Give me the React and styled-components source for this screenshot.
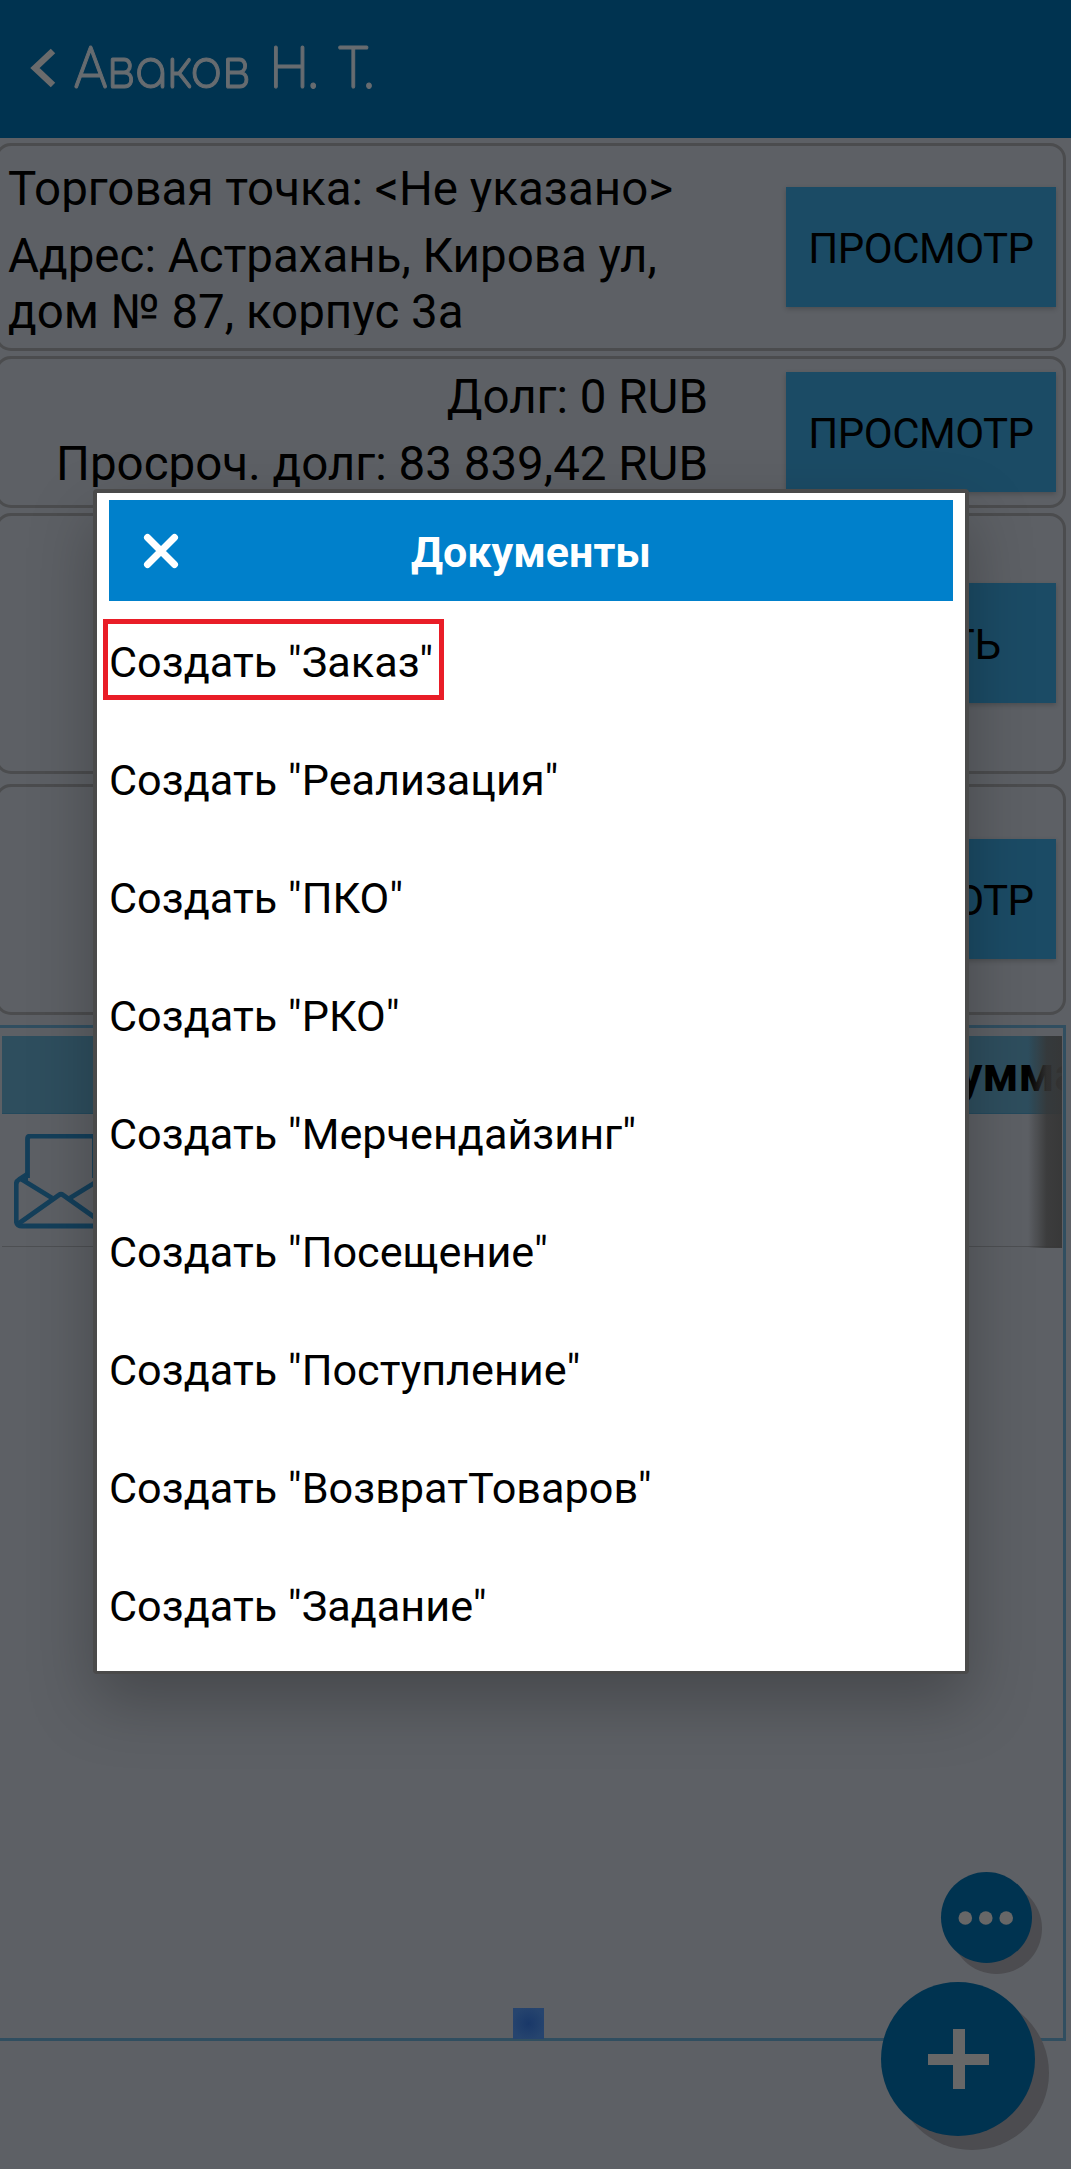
import React from "react";
import styled, { createGlobalStyle, css } from "styled-components";

const Global = createGlobalStyle`
  * { box-sizing: border-box; }
  html, body { margin: 0; padding: 0; background: #5d6065; }
  body { font-family: Roboto, "Liberation Sans", sans-serif; color: #000; }
  button { font-family: inherit; border: 0; margin: 0; padding: 0; }
`;

const Screen = styled.main`
  position: relative;
  width: 1071px;
  height: 2169px;
  overflow: hidden;
  background: #5d6065;
`;

const TopBar = styled.header`
  display: flex;
  align-items: center;
  height: 138px;
  padding-left: 29px;
  background: #003350;
  color: #676c70;
`;

const BackIcon = styled.svg`
  display: block;
  margin-top: -3px;
  color: #6a6b6c;
`;

const Person = styled.h1`
  margin: 0 0 0 18px;
  padding-top: 3px;
  font-family: Comfortaa, Inter, sans-serif;
  font-size: 54px;
  font-weight: 300;
  line-height: 64px;
  word-spacing: 7px;
  white-space: nowrap;
  transform: scaleX(0.872);
  transform-origin: left center;
  -webkit-text-stroke: 1.1px currentColor;
`;

const Cards = styled.div`
  display: flex;
  flex-direction: column;
  padding-top: 5px;
`;

const Card = styled.section`
  display: flex;
  justify-content: space-between;
  flex: none;
  width: 1071px;
  height: ${(p) => p.$height}px;
  margin: 0 0 ${(p) => p.$gap}px -5px;
  padding: 0 7px 0 10px;
  border: 3px solid #4b4c4e;
  border-radius: 16px;
`;

const Lines = styled.div`
  flex: none;
  width: 700px;
  padding-top: ${(p) => p.$top}px;
  text-align: ${(p) => p.$align || "left"};
`;

const Line = styled.p`
  margin: 0 0 ${(p) => (p.$rows ? 0 : 16)}px;
  font-size: 47.5px;
  line-height: 56px;
  height: ${(p) => (p.$rows || 1) * 56 - 5}px;
  overflow: hidden;
  white-space: pre;
`;

const ViewButton = styled.button`
  flex: none;
  width: 270px;
  height: 120px;
  margin-top: ${(p) => p.$top}px;
  padding-top: 4px;
  background: #1b4b65;
  color: #000;
  font-size: 42px;
  line-height: 50px;
  letter-spacing: -0.5px;
  box-shadow: 0 2px 5px rgba(0, 0, 0, 0.2);
`;

const Table = styled.section`
  flex: none;
  width: 1069px;
  height: 1016px;
  margin-left: -3px;
  padding: 8px 1px 0 2px;
  border: 3px solid #304e60;
`;

const TableScroll = styled.div`
  position: relative;
  height: 212px;
  overflow: hidden;
`;

const TableHead = styled.div`
  display: flex;
  justify-content: flex-end;
  align-items: center;
  height: 78px;
  background: #2e4e5e;
  border-bottom: 1px solid #24495c;
  font-size: 47.5px;
  font-weight: 700;
  white-space: nowrap;
`;

const HeadCell = styled.span`
  flex: none;
  margin-right: -18px;
`;

const TableRow = styled.div`
  height: 133px;
  padding: 20px 0 0 12px;
  border-bottom: 1px solid #4d4f52;
`;

const EdgeFade = styled.div`
  position: absolute;
  top: 0;
  right: 0;
  width: 34px;
  height: 100%;
  background: linear-gradient(90deg, rgba(54, 54, 54, 0), rgba(54, 54, 54, 0.85) 55%, rgba(54, 54, 54, 0.95));
`;

const Handle = styled.div`
  position: absolute;
  left: 513px;
  top: 2008px;
  width: 31px;
  height: 31px;
  background: radial-gradient(circle, #193869, #26446e 75%);
`;

const Fab = styled.button`
  position: absolute;
  display: flex;
  align-items: center;
  justify-content: center;
  border-radius: 50%;
  background: #003350;
  color: #676767;
  ${(p) =>
    p.$large
      ? css`
          left: 881px;
          top: 1982px;
          width: 154px;
          height: 154px;
          box-shadow: 14px 14px 0 #4c4c50;
        `
      : css`
          left: 940.5px;
          top: 1872px;
          width: 91px;
          height: 91px;
          box-shadow: 10px 11px 0 #4c4c50;
        `}
`;

const Overlay = styled.div`
  position: absolute;
  inset: 0;
  padding: 489px 0 0 93px;
`;

const Dialog = styled.div`
  width: 876px;
  height: 1185px;
  padding: 7px 12px 0;
  border: 4px solid #4a4a4a;
  border-bottom-width: 3px;
  border-radius: 4px;
  background: #fff;
  background-clip: padding-box;
  box-shadow: 0 28px 64px rgba(0, 0, 0, 0.25);
`;

const DialogHead = styled.div`
  display: grid;
  grid-template-columns: 104px 1fr 104px;
  align-items: center;
  height: 101px;
  background: #0080cb;
  color: #fff;
`;

const Close = styled.button`
  justify-self: start;
  display: flex;
  margin-left: 34px;
  background: none;
  color: inherit;
`;

const DialogTitle = styled.h2`
  margin: 0;
  padding-top: 2px;
  font-size: 43px;
  font-weight: 700;
  line-height: 50px;
  text-align: center;
`;

const List = styled.ul`
  margin: 0;
  padding: 3px 0 0;
  list-style: none;
`;

const Item = styled.li`
  position: relative;
  display: flex;
  align-items: center;
  height: 118px;
  font-size: 43.2px;
  line-height: 50px;
  white-space: nowrap;
`;

const Highlight = styled.span`
  position: absolute;
  left: -6px;
  top: 15px;
  width: 341px;
  height: 81px;
  border: 5px solid #e91d27;
`;

const Envelope = () => (
  <svg width="94" height="95" viewBox="0 0 94 95" fill="none" stroke="#143f5a" strokeWidth="4.8" strokeLinejoin="round">
    <path d="M13.5 44V5q0-3 3-3h61q3 0 3 3v39" />
    <path d="M13.5 40 5 45.500q-2.800 1.500-2.800 5V86q0 6 6 6h77.600q6 0 6-6V50.500q0-3.500-2.800-5L80.500 40" />
    <path d="M4 90 45 61q2-1.500 4 0L90 90" />
    <path d="M7 45 38 64M87 45 56 64" />
    <path d="M13 41 8 45l5 3zM81 41l5 4-5 3z" fill="#143f5a" strokeWidth="2" />
  </svg>
);

const documents = [
  "Заказ",
  "Реализация",
  "ПКО",
  "РКО",
  "Мерчендайзинг",
  "Посещение",
  "Поступление",
  "ВозвратТоваров",
  "Задание",
];

export default function App() {
  return (
    <Screen>
      <Global />
      <TopBar>
        <BackIcon width="27" height="40" viewBox="0 0 27 40" fill="none" stroke="currentColor" strokeWidth="6.5">
          <path d="M24 3 6 20l18 17" />
        </BackIcon>
        <Person>Аваков Н. Т.</Person>
      </TopBar>

      <Cards>
        <Card $height={208} $gap={5}>
          <Lines $top={15}>
            <Line>Торговая точка: &lt;Не указано&gt;</Line>
            <Line $rows={2}>{"Адрес: Астрахань, Кирова ул,\nдом № 87, корпус 3а"}</Line>
          </Lines>
          <ViewButton $top={41}>ПРОСМОТР</ViewButton>
        </Card>
        <Card $height={152} $gap={5}>
          <Lines $top={10} $align="right">
            <Line>Долг: 0 RUB</Line>
            <Line>Просроч. долг: 83 839,42 RUB</Line>
          </Lines>
          <ViewButton $top={13}>ПРОСМОТР</ViewButton>
        </Card>
        <Card $height={261} $gap={10}>
          <Lines $top={0} />
          <ViewButton $top={67}>НАЧАТЬ</ViewButton>
        </Card>
        <Card $height={231} $gap={10}>
          <Lines $top={0} />
          <ViewButton $top={52}>ПРОСМОТР</ViewButton>
        </Card>
        <Table>
          <TableScroll>
            <TableHead>
              <HeadCell>Сумма</HeadCell>
            </TableHead>
            <TableRow>
              <Envelope />
            </TableRow>
            <EdgeFade />
          </TableScroll>
        </Table>
      </Cards>

      <Handle />
      <Fab aria-label="Ещё">
        <svg width="56" height="14" viewBox="0 0 56 14" fill="currentColor">
          <circle cx="7.3" cy="7" r="6.8" />
          <circle cx="27.8" cy="7" r="6.8" />
          <circle cx="48.2" cy="7" r="6.8" />
        </svg>
      </Fab>
      <Fab $large aria-label="Добавить">
        <svg width="61" height="60" viewBox="0 0 61 60" fill="currentColor">
          <path d="M25 0h12v25h24v11H37v24H25V36H0V25h25z" />
        </svg>
      </Fab>

      <Overlay>
        <Dialog>
          <DialogHead>
            <Close aria-label="Закрыть">
              <svg width="36" height="36" viewBox="0 0 36 36" fill="none" stroke="currentColor" strokeWidth="7" strokeLinecap="round">
                <path d="M4.500 4.500l27 27M31.500 4.500l-27 27" />
              </svg>
            </Close>
            <DialogTitle>Документы</DialogTitle>
          </DialogHead>
          <List>
            {documents.map((name, i) => (
              <Item key={name}>
                Создать "{name}"
                {i === 0 && <Highlight />}
              </Item>
            ))}
          </List>
        </Dialog>
      </Overlay>
    </Screen>
  );
}
